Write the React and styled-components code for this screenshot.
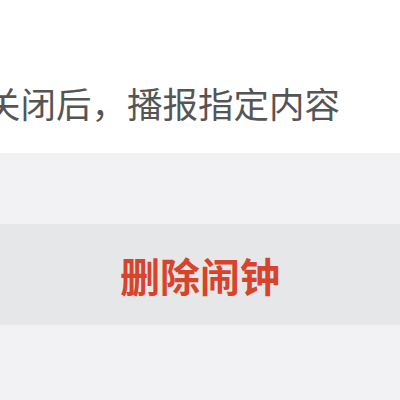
import React from "react";
import styled, { createGlobalStyle } from "styled-components";

const Global = createGlobalStyle`
  html, body { margin: 0; padding: 0; background: #f2f2f4; }
  body { font-family: "Noto Sans CJK SC", "Noto Sans", sans-serif; }
`;

const Page = styled.div`
  width: 400px;
  height: 400px;
  overflow: hidden;
  background: #f2f2f4;
  display: flex;
  flex-direction: column;
`;

const Section = styled.div`
  background: #fff;
  height: 153px;
  display: flex;
  align-items: center;
  overflow: hidden;
`;

const Hint = styled.div`
  margin-left: -15px;
  margin-top: 52px;
  font-size: 35.5px;
  line-height: 1;
  color: #555;
  white-space: nowrap;
`;

const DangerButton = styled.div`
  margin-top: 71px;
  height: 101px;
  background: #e6e7e9;
  display: flex;
  align-items: center;
  justify-content: center;
  font-size: 40px;
  font-weight: 700;
  color: #d8432c;
`;

export default function App() {
  return (
    <Page>
      <Global />
      <Section>
        <Hint>关闭后，播报指定内容</Hint>
      </Section>
      <DangerButton>删除闹钟</DangerButton>
    </Page>
  );
}
